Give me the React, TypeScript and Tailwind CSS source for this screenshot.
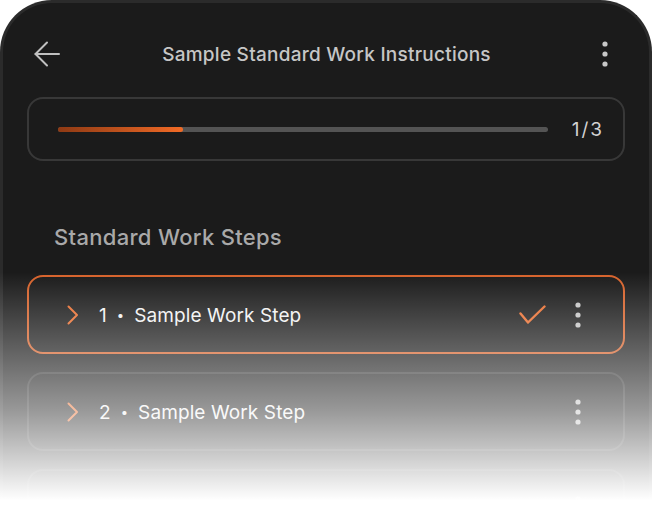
import React from "react";

function Kebab({ color = "#c8c8c8" }: { color?: string }) {
  return (
    <svg width="24" height="26" viewBox="0 0 24 26" fill={color}>
      <circle cx="12" cy="3" r="2.6" />
      <circle cx="12" cy="13" r="2.6" />
      <circle cx="12" cy="23" r="2.6" />
    </svg>
  );
}

function Chevron() {
  return (
    <svg width="12" height="20" viewBox="0 0 12 20" fill="none" stroke="#ea6e2f" strokeWidth="2" strokeLinecap="round" strokeLinejoin="round">
      <path d="M1.5 1.5 L10 10 L1.5 18.5" />
    </svg>
  );
}

function StepCard({ n, done, active }: { n: number; done?: boolean; active?: boolean }) {
  return (
    <div
      className={
        "h-[79px] rounded-[16px] border-2 flex items-center pl-[38px] pr-[33px] " +
        (active ? "border-[#d6622b]" : "border-[#333333]")
      }
    >
      <Chevron />
      <div className="ml-[20px] pt-[3px] flex items-center text-[19px] text-[#f2f2f2] tracking-[0.1px]">
        <span>{n}</span>
        <span className="mx-[10px] text-[13px]">•</span>
        <span>Sample Work Step</span>
      </div>
      <div className="flex-1" />
      {done && (
        <svg width="27" height="20" viewBox="0 0 27 20" fill="none" stroke="#ea6e2f" strokeWidth="2.4" strokeLinecap="round" strokeLinejoin="round" className="mr-[20px]">
          <path d="M1.5 8.5 L9 17.5 L25.5 1.5" />
        </svg>
      )}
      <Kebab color="#c4c4c4" />
    </div>
  );
}

export default function App() {
  return (
    <div
      className="relative w-[652px] h-[510px] overflow-hidden bg-white"
      style={{ fontFamily: "Inter, 'Noto Sans', sans-serif" }}
    >
      <div className="w-[652px] h-[600px] bg-[#1b1b1b] border-[3px] border-b-0 border-[#2b2b2b] rounded-t-[52px] pt-[27px]">
        <div className="h-[48px] flex items-center justify-between pl-[31px] pr-[32px]">
          <svg width="26" height="26" viewBox="0 0 26 26" fill="none" stroke="#c0c0c0" strokeWidth="2" strokeLinecap="round" strokeLinejoin="round">
            <path d="M1.5 13 H25" />
            <path d="M13 1.5 L1.5 13 L13 24.5" />
          </svg>
          <div className="pt-[2px] text-[19px] font-medium text-[#c6c6c6] tracking-[0.25px]">
            Sample Standard Work Instructions
          </div>
          <Kebab color="#c8c8c8" />
        </div>

        <div className="px-6">
          <div className="mt-[19px] h-[64px] rounded-[16px] border-2 border-[#383838] flex items-center pl-[29px] pr-[19px] gap-[24px]">
            <div className="flex-1 h-[5px] rounded-full bg-[#545454]">
              <div className="h-[5px] w-[125px] rounded-full bg-gradient-to-r from-[#8f3a14] to-[#f26b26]" />
            </div>
            <div className="pt-[3px] text-[19px] text-[#d2d2d2] tracking-[2px]">1/3</div>
          </div>

          <div className="mt-[62px] pl-[27px] h-[28px] flex items-center text-[22px] font-medium text-[#a9a9a9] tracking-[0.3px]">
            Standard Work Steps
          </div>

          <div className="mt-[24px] flex flex-col gap-[18px]">
            <StepCard n={1} done active />
            <StepCard n={2} />
            <StepCard n={3} />
          </div>
        </div>
      </div>

      <div
        className="absolute left-0 right-0 top-[272px] bottom-0 pointer-events-none"
        style={{ background: "linear-gradient(to bottom, rgba(255,255,255,0) 0%, rgba(255,255,255,0.55) 58%, rgba(255,255,255,1) 96%)" }}
      />
    </div>
  );
}
